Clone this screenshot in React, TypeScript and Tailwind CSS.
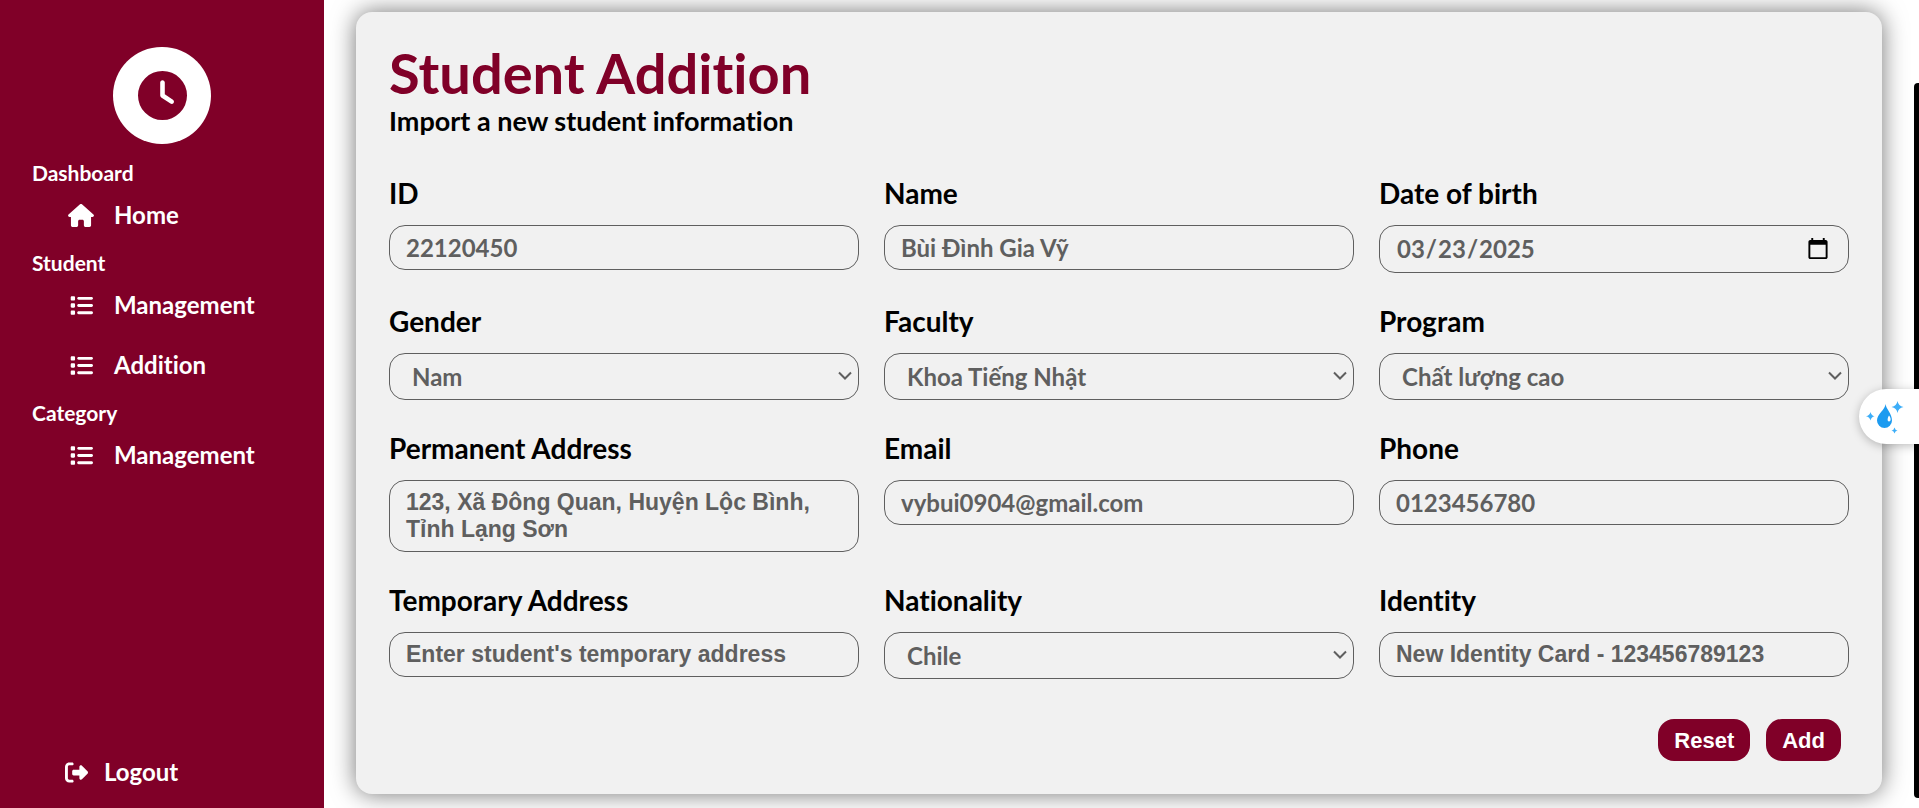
import type { ReactNode } from "react";
import { FaClock, FaHouse, FaList, FaRightFromBracket } from "react-icons/fa6";

const control =
  "w-full rounded-2xl border border-[#5f5f5f] bg-transparent text-[#5f5f5f] font-bold outline-none";

const area =
  "block resize-none overflow-hidden px-4 py-2 font-['Liberation_Sans',sans-serif] text-[23px] leading-[27px] placeholder:text-[#5f5f5f]";

function Field({ id, label, children }: { id: string; label: string; children: ReactNode }) {
  return (
    <div className="flex min-w-0 flex-col gap-4">
      <label htmlFor={id} className="text-[28px] leading-8 font-bold text-black">
        {label}
      </label>
      {children}
    </div>
  );
}

function Text({ id, label, value, type = "text" }: { id: string; label: string; value: string; type?: string }) {
  return (
    <Field id={id} label={label}>
      <input id={id} type={type} defaultValue={value} className={`${control} h-[45px] px-4 text-2xl`} />
    </Field>
  );
}

function Choice({ id, label, options }: { id: string; label: string; options: string[] }) {
  return (
    <Field id={id} label={label}>
      <div className="relative">
        <select id={id} className={`${control} block h-[47px] appearance-none pr-8 pl-[22px] text-2xl`}>
          {options.map((option) => (
            <option key={option}>{option}</option>
          ))}
        </select>
        <svg
          viewBox="0 0 14 10"
          className="pointer-events-none absolute top-[18px] right-[7px] h-[10px] w-[14px]"
          fill="none"
          stroke="#5f5f5f"
          strokeWidth="2"
        >
          <path d="M1 1.500L7 7.500L13 1.500" />
        </svg>
      </div>
    </Field>
  );
}

function NavSection({ title, children }: { title: string; children: ReactNode }) {
  return (
    <section>
      <h2 className="pt-1.5 pl-8 text-[21px] leading-6 font-bold">{title}</h2>
      <ul>{children}</ul>
    </section>
  );
}

function NavItem({ icon, label }: { icon: ReactNode; label: string }) {
  return (
    <li>
      <a href="#" className="flex h-[60px] items-center gap-5 pl-[68px] text-2xl font-bold">
        <span className="flex w-[26px] justify-center">{icon}</span>
        {label}
      </a>
    </li>
  );
}

function Sidebar() {
  return (
    <aside className="flex w-[324px] shrink-0 flex-col bg-[#800028] text-white">
      <div className="mt-[47px] mb-[11px] flex h-[97px] w-[98px] items-center justify-center self-center rounded-full bg-white">
        <FaClock className="size-[49px] text-[#800028]" />
      </div>
      <nav>
        <NavSection title="Dashboard">
          <NavItem icon={<FaHouse className="h-[23px] w-[26px]" />} label="Home" />
        </NavSection>
        <NavSection title="Student">
          <NavItem icon={<FaList className="size-[23px]" />} label="Management" />
          <NavItem icon={<FaList className="size-[23px]" />} label="Addition" />
        </NavSection>
        <NavSection title="Category">
          <NavItem icon={<FaList className="size-[23px]" />} label="Management" />
        </NavSection>
      </nav>
      <button type="button" className="mt-auto mb-4 flex h-10 items-center gap-4 pl-[65px] text-2xl font-bold">
        <FaRightFromBracket className="size-[23px]" />
        Logout
      </button>
    </aside>
  );
}

function AssistantTab() {
  return (
    <button
      type="button"
      aria-label="Assistant"
      className="fixed top-[389px] right-0 h-[55px] w-[60px] rounded-l-full bg-white shadow-[0_2px_10px_rgba(0,0,0,0.25)]"
    >
      <svg viewBox="0 0 60 55" className="h-full w-full">
        <path
          fill="#1d9bf0"
          d="M26.500 15C27 20 33 24.500 33 31.500A7.500 7.500 0 0 1 18 31.500C18 25 26 21 26.500 15Z"
        />
        <path fill="#ffffff" d="M30 26.500C32.300 29 32 32.500 30 32.500C28 32.500 28.300 29 30 26.500Z" />
        <g fill="#3daef8">
          <path d="M38.500 12Q39.300 17 44.500 18Q39.300 19 38.500 24Q37.700 19 32.500 18Q37.700 17 38.500 12Z" />
          <path d="M11.500 23Q12.200 26.400 15.500 27.200Q12.200 28 11.500 31.500Q10.800 28 7 27.200Q10.800 26.400 11.500 23Z" />
          <path d="M35.500 38.500Q36 41 38.500 41.500Q36 42 35.500 44.500Q35 42 32.500 41.500Q35 41 35.500 38.500Z" />
        </g>
      </svg>
    </button>
  );
}

export default function App() {
  return (
    <div className="flex min-h-screen bg-white font-['Lato','Noto_Sans',sans-serif] [font-variant-ligatures:none]">
      <Sidebar />
      <main className="min-w-0 flex-1 pt-3 pr-[37px] pb-3 pl-8">
        <form
          onSubmit={(event) => event.preventDefault()}
          className="rounded-2xl bg-[#f1f1f1] p-[33px] shadow-[0_0_24px_rgba(0,0,0,0.55)]"
        >
          <h1 className="text-[56px] leading-[56px] font-bold text-[#800028]">Student Addition</h1>
          <p className="text-[27px] leading-10 font-bold text-black">Import a new student information</p>

          <div className="mt-9 grid grid-cols-3 gap-x-[25px] gap-y-8">
            <Text id="student-id" label="ID" value="22120450" />
            <Text id="name" label="Name" value="Bùi Đình Gia Vỹ" />
            <Field id="birth" label="Date of birth">
              <input id="birth" type="date" defaultValue="2025-03-23" className={`${control} h-12 px-4 text-2xl`} />
            </Field>

            <Choice id="gender" label="Gender" options={["Nam", "Nữ"]} />
            <Choice id="faculty" label="Faculty" options={["Khoa Tiếng Nhật"]} />
            <Choice id="program" label="Program" options={["Chất lượng cao"]} />

            <Field id="permanent" label="Permanent Address">
              <textarea
                id="permanent"
                rows={2}
                defaultValue="123, Xã Đông Quan, Huyện Lộc Bình, Tỉnh Lạng Sơn"
                className={`${control} ${area}`}
              />
            </Field>
            <Text id="email" label="Email" type="email" value="vybui0904@gmail.com" />
            <Text id="phone" label="Phone" type="tel" value="0123456780" />

            <Field id="temporary" label="Temporary Address">
              <textarea
                id="temporary"
                rows={1}
                placeholder="Enter student's temporary address"
                className={`${control} ${area}`}
              />
            </Field>
            <Choice id="nationality" label="Nationality" options={["Chile"]} />
            <Field id="identity" label="Identity">
              <textarea
                id="identity"
                rows={1}
                defaultValue="New Identity Card - 123456789123"
                className={`${control} ${area}`}
              />
            </Field>
          </div>

          <div className="mt-10 flex justify-end gap-4 pr-2 font-['Liberation_Sans',sans-serif]">
            <button type="button" className="h-[42px] rounded-2xl bg-[#800028] px-4 text-[22px] font-bold text-white">
              Reset
            </button>
            <button type="submit" className="h-[42px] rounded-2xl bg-[#800028] px-4 text-[22px] font-bold text-white">
              Add
            </button>
          </div>
        </form>
      </main>
      <div className="fixed top-[83px] right-0 bottom-[10px] w-[5px] rounded-l bg-black" />
      <AssistantTab />
    </div>
  );
}
